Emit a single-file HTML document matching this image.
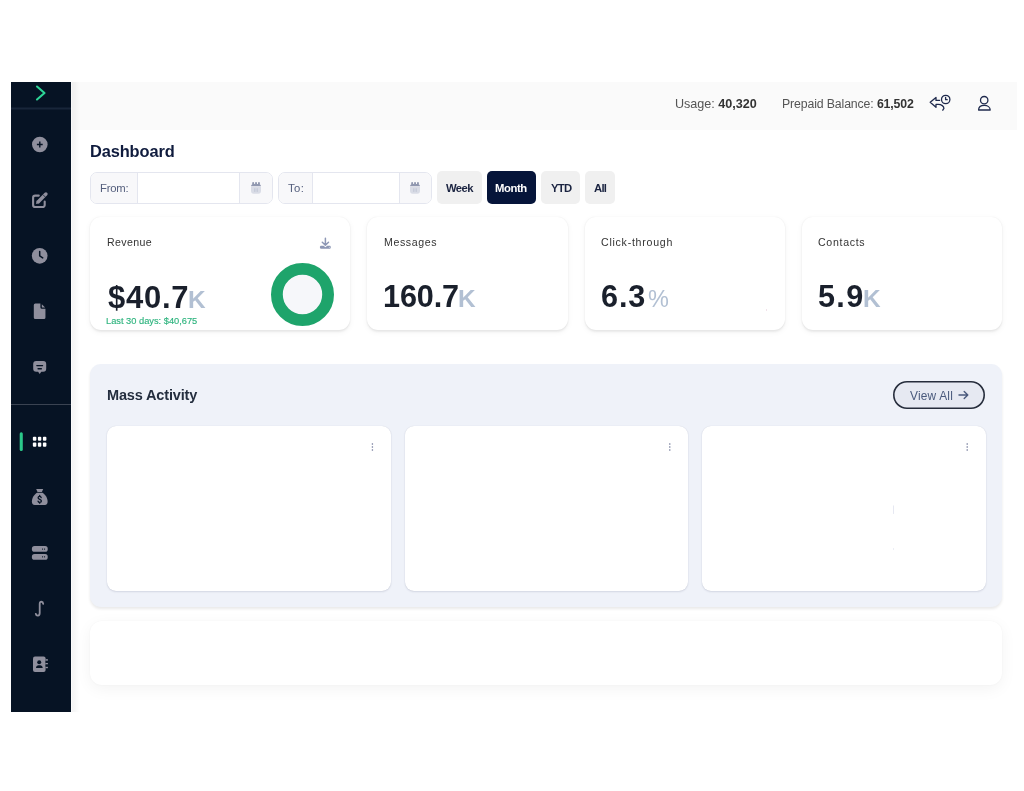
<!DOCTYPE html>
<html><head><meta charset="utf-8">
<style>
*{box-sizing:border-box;margin:0;padding:0}
html,body{width:1024px;height:791px;overflow:hidden;background:#fff;font-family:"Liberation Sans",sans-serif}
.a{position:absolute}
#sb{left:11px;top:82px;width:60px;height:630px;background:#061324}
#top{left:71px;top:82px;width:946px;height:48px;background:#fafafa}
#gut{left:71px;top:82px;width:9px;height:630px;background:linear-gradient(to right,rgba(255,255,255,.9) 0,rgba(0,0,0,.045) 1.2px,rgba(0,0,0,.03) 4px,rgba(0,0,0,.012) 7px,rgba(0,0,0,0) 9px)}
.txt{white-space:nowrap;line-height:1;-webkit-font-smoothing:antialiased;will-change:transform}
.ig{height:31.5px;border:1px solid #e4e6ef;border-radius:7px;background:#fff;overflow:hidden}
.ig .lb{position:absolute;top:0;bottom:0;left:0;background:#f8f8fa;border-right:1px solid #e4e6ef}
.ig .cal{position:absolute;top:0;bottom:0;right:0;background:#f8f8fa;border-left:1px solid #e4e6ef}
.btn{top:171px;height:33px;border-radius:5px;background:#f0f0f0;color:#1b2441;font-weight:bold;font-size:10.3px}
.card{top:217.3px;height:113.2px;background:#fff;border-radius:11px;box-shadow:0 1.5px 2px rgba(0,0,0,.055),0 2px 6px rgba(0,0,0,.05),0 0 1.5px rgba(0,0,0,.06)}
.ct{font-size:10.5px;letter-spacing:.3px;color:#333}
.val{font-weight:bold;color:#1a202c}
.k{font-weight:bold;color:#b2c0d3}
.mc{top:426px;height:164.5px;background:#fff;border-radius:9px;box-shadow:0 1px 2px rgba(30,40,80,.12),0 0 1px rgba(30,40,80,.15)}
.ic{fill:#8e8e9b}
</style></head><body>
<div id="sb" class="a"></div>
<div id="top" class="a"></div>
<div id="gut" class="a"></div>

<!-- sidebar icons -->
<svg class="a" style="left:0;top:0" width="80" height="791" viewBox="0 0 80 791">
  <polyline points="37,86.5 44.5,93 37,99.5" fill="none" stroke="#2dd697" stroke-width="2.1" stroke-linecap="round" stroke-linejoin="round"/>
  <rect x="11" y="107.5" width="60" height="2" fill="#18263a"/>
  <g fill="#8f8f9d">
  <!-- plus circle -->
  <circle cx="39.8" cy="144.5" r="7.8"/>
  <!-- edit -->
  <path d="M38.8,195.6 H35.2 a2.1,2.1 0 0 0 -2.1,2.1 V204.9 a2.1,2.1 0 0 0 2.1,2.1 H42.6 a2.1,2.1 0 0 0 2.1,-2.1 V201.6" fill="none" stroke="#8f8f9d" stroke-width="2.1" stroke-linecap="round"/>
  <line x1="38.3" y1="201.7" x2="45.9" y2="194.1" stroke="#8f8f9d" stroke-width="3.5" stroke-linecap="round"/>
  <path d="M35.9,204 L36.9,200.3 L39.7,203.1 Z"/>
  <!-- clock -->
  <circle cx="39.7" cy="255.8" r="7.85"/>
  <!-- file -->
  <path d="M35.3,303.6 H40.4 V307.3 a1.5,1.5 0 0 0 1.5,1.5 H45.45 V317.6 a1.5,1.5 0 0 1 -1.5,1.5 H35.3 a1.5,1.5 0 0 1 -1.5,-1.5 V305.1 a1.5,1.5 0 0 1 1.5,-1.5 Z"/>
  <path d="M41.8,304.2 L45.1,307.6 H42.3 a0.5,0.5 0 0 1 -0.5,-0.5 Z"/>
  <!-- message -->
  <path d="M36.2,360.9 H43.2 a3,3 0 0 1 3,3 V368.8 a3,3 0 0 1 -3,3 H41.3 L39.7,374 L38.1,371.8 H36.2 a3,3 0 0 1 -3,-3 V363.9 a3,3 0 0 1 3,-3 Z"/>
  <!-- money bag -->
  <path d="M36.2,488.9 H43.2 L41.9,492 H37.5 Z"/>
  <path d="M37,492.8 H42.5 C45.5,494.5 47.6,498.5 47.6,501.5 C47.6,503.5 46.8,505 44.8,505 H34.7 C32.7,505 31.9,503.5 31.9,501.5 C31.9,498.5 34,494.5 37,492.8 Z"/>
  <!-- server -->
  <rect x="31.9" y="546" width="15.8" height="5.8" rx="2.6"/>
  <rect x="31.9" y="553.9" width="15.8" height="5.9" rx="2.6"/>
  <!-- integral -->
  <path d="M43.2,603.8 C43,601.5 39.7,600.6 39.7,604 V613 C39.7,616.3 36.3,616.3 35.8,613.8" fill="none" stroke="#8f8f9d" stroke-width="1.8" stroke-linecap="round"/>
  <!-- contacts -->
  <rect x="33" y="656.6" width="12.6" height="15.4" rx="2"/>
  <rect x="45.6" y="659.2" width="2.3" height="1.6"/>
  <rect x="45.6" y="662.9" width="2.3" height="1.6"/>
  <rect x="45.6" y="666.6" width="2.3" height="1.6"/>
  </g>
  <g fill="#061324" stroke="none">
  <path d="M36.9,144.5h5.8M39.8,141.6v5.8" stroke="#061324" stroke-width="1.4"/>
  <path d="M39.7,251.4 V255.9 L42.7,257.9" fill="none" stroke="#061324" stroke-width="1.5" stroke-linecap="round" stroke-linejoin="round"/>
  <line x1="42.9" y1="194.6" x2="45.4" y2="197.1" stroke="#061324" stroke-width="0.7"/>
  <rect x="36.2" y="364.9" width="7" height="1.3" rx=".6"/>
  <rect x="37.4" y="368.1" width="4.6" height="1.3" rx=".6"/>
  <path d="M41.2,497.6 C41,496.8 40.4,496.4 39.7,496.4 C38.7,496.4 38.1,496.9 38.1,497.7 C38.1,499.6 41.4,499 41.4,501 C41.4,501.8 40.7,502.3 39.7,502.3 C38.9,502.3 38.3,501.9 38.1,501.2 M39.7,495.4 V496.4 M39.7,502.3 V503.2" fill="none" stroke="#061324" stroke-width="1.3" stroke-linecap="round"/>
  <rect x="42" y="548.4" width="1.1" height="1.3" rx=".4"/>
  <rect x="44" y="548.4" width="1.1" height="1.3" rx=".4"/>
  <rect x="42" y="556.2" width="1.1" height="1.3" rx=".4"/>
  <rect x="44" y="556.2" width="1.1" height="1.3" rx=".4"/>
  <circle cx="39.2" cy="662.3" r="2"/>
  <path d="M36,668 C36,666.2 37.3,665.3 38.4,665.3 H40.2 C41.3,665.3 42.7,666.2 42.7,668 Z"/>
  <rect x="45.6" y="660.8" width="2.3" height="2.1"/>
  <rect x="45.6" y="664.5" width="2.3" height="2.1"/>
  </g>
  <rect x="11" y="404" width="60" height="1" fill="#3a4352"/>
  <rect x="19.7" y="432.3" width="3.1" height="18.8" rx="1.5" fill="#2bc88a"/>
  <g fill="#fff">
  <rect x="32.85" y="436.7" width="3.5" height="4.1" rx="1"/>
  <rect x="37.9" y="436.7" width="3.4" height="4.1" rx="1"/>
  <rect x="42.9" y="436.7" width="3.5" height="4.1" rx="1"/>
  <rect x="32.85" y="442.6" width="3.5" height="4.1" rx="1"/>
  <rect x="37.9" y="442.6" width="3.4" height="4.1" rx="1"/>
  <rect x="42.9" y="442.6" width="3.5" height="4.1" rx="1"/>
  </g>
</svg>

<!-- top bar -->
<div class="a txt" style="left:675.02px;top:98.08px;font-size:12.6px;letter-spacing:-0.02px;color:#555">Usage: <b style="color:#333">40,320</b></div>
<div class="a txt" style="left:781.65px;top:98.0px;font-size:12.3px;letter-spacing:-0.13px;color:#555">Prepaid Balance: <b style="color:#333">61,502</b></div>


<svg class="a" style="left:920px;top:88px" width="80" height="30" viewBox="920 88 80 30">
  <g fill="none" stroke="#1f2a4d" stroke-width="1.3" stroke-linecap="round" stroke-linejoin="round">
    <path d="M939.6,100.4 H936 V97.4 L930.2,102.3 L936,107.3 V104.4 H938.3 C941.5,104.4 943.9,106.3 943.9,108.4 L942.8,110.2"/>
    <circle cx="945.7" cy="99.5" r="4.2"/>
    <path d="M945.6,97.3 V99.7 H947.2"/>
    <circle cx="984.2" cy="100.2" r="3.7"/>
    <path d="M978.6,110 C978.6,107.2 981,105.4 984.3,105.4 C987.6,105.4 990.2,107.2 990.2,110 Z"/>
  </g>
</svg>

<!-- title -->
<div class="a txt" style="left:90.01px;top:142.5px;font-size:16.4px;letter-spacing:-0.12px;font-weight:bold;color:#0f1b3d">Dashboard</div>

<!-- date groups -->
<div class="a ig" style="left:90px;top:172px;width:183px">
  <div class="lb" style="width:47px"></div>
  <div class="cal" style="width:33px"></div>
</div>
<div class="a ig" style="left:277.5px;top:172px;width:154.5px">
  <div class="lb" style="width:34px"></div>
  <div class="cal" style="width:32.5px"></div>
</div>
<div class="a txt" style="left:99.51px;top:183.23px;font-size:11.3px;letter-spacing:-0.2px;color:#56607e">From:</div>
<div class="a txt" style="left:287.51px;top:183.23px;font-size:11.3px;letter-spacing:0.36px;color:#56607e">To:</div>

<div class="a btn" style="left:437px;width:45px"></div>
<div class="a btn" style="left:487px;width:49px;background:#06153a"></div>
<div class="a btn" style="left:541px;width:39px"></div>
<div class="a btn" style="left:585px;width:30px"></div>
<div class="a txt" style="left:445.78px;top:182.94px;font-size:11.3px;letter-spacing:-0.6px;font-weight:bold;color:#1b2441">Week</div>
<div class="a txt" style="left:494.96px;top:182.94px;font-size:11.3px;letter-spacing:-0.42px;font-weight:bold;color:#fff">Month</div>
<div class="a txt" style="left:550.5px;top:182.94px;font-size:11.3px;letter-spacing:-0.75px;font-weight:bold;color:#1b2441">YTD</div>
<div class="a txt" style="left:593.8px;top:182.94px;font-size:11.3px;letter-spacing:-0.73px;font-weight:bold;color:#1b2441">All</div>

<!-- cards -->
<div class="a card" style="left:90px;width:260px"></div>
<div class="a card" style="left:367px;width:201px"></div>
<div class="a card" style="left:585px;width:200px"></div>
<div class="a card" style="left:802px;width:200px"></div>

<div class="a txt" style="left:106.62px;top:236.98px;font-size:10.6px;letter-spacing:0.39px;color:#333">Revenue</div>
<div class="a txt" style="left:383.69px;top:236.88px;font-size:10.6px;letter-spacing:0.61px;color:#333">Messages</div>
<div class="a txt" style="left:601.2px;top:236.88px;font-size:10.6px;letter-spacing:0.74px;color:#333">Click-through</div>
<div class="a txt" style="left:818.2px;top:236.88px;font-size:10.6px;letter-spacing:0.69px;color:#333">Contacts</div>

<div class="a txt val" style="left:107.62px;top:282.2px;font-size:31.0px;letter-spacing:0.74px;">$40.7</div><div class="a txt k" style="left:187.98px;top:288.2px;font-size:24.4px;letter-spacing:-1.72px;letter-spacing:0">K</div>
<div class="a txt val" style="left:383.01px;top:280.8px;font-size:30.6px;letter-spacing:-0.13px;">160.7</div><div class="a txt k" style="left:458.18px;top:286.8px;font-size:24.4px;letter-spacing:-2.02px;letter-spacing:0">K</div>
<div class="a txt val" style="left:601.18px;top:280.8px;font-size:30.6px;letter-spacing:0.91px;">6.3</div><div class="a txt k" style="left:647.92px;top:287.84px;font-size:23.5px;letter-spacing:-0.15px;letter-spacing:0;font-weight:normal">%</div>
<div class="a txt val" style="left:818.07px;top:280.8px;font-size:30.6px;letter-spacing:1.31px;">5.9</div><div class="a txt k" style="left:862.88px;top:286.8px;font-size:24.4px;letter-spacing:-0.22px;letter-spacing:0">K</div>
<div class="a txt" style="left:106.49px;top:316.94px;font-size:9.3px;letter-spacing:-0.01px;color:#2fb47f;-webkit-text-stroke:0.15px #2fb47f">Last 30 days: $40,675</div>

<svg class="a" style="left:270px;top:262px" width="66" height="66" viewBox="0 0 66 66">
  <circle cx="32.5" cy="32.5" r="25.6" fill="#f6f7fa" stroke="#1ea46b" stroke-width="11.8"/>
</svg>

<!-- mass activity -->
<div class="a" style="left:90px;top:364px;width:912px;height:243px;background:#eff2f9;border-radius:11px;box-shadow:0 2px 3px rgba(0,0,0,.09)"></div>
<div class="a txt" style="left:106.68px;top:387.9px;font-size:14.5px;letter-spacing:-0.15px;font-weight:bold;color:#242e3f">Mass Activity</div>
<svg class="a" style="left:892px;top:380px" width="94" height="30" viewBox="892 380 94 30"><rect x="893.8" y="381.8" width="90.4" height="26.4" rx="13.2" fill="#e6e9f2" stroke="#262d3c" stroke-width="1.6"/></svg>
<div class="a txt" style="left:909.87px;top:390.52px;font-size:11.9px;letter-spacing:0.2px;color:#4a5a7d">View All</div>
<div class="a mc" style="left:107px;width:283.5px"></div>
<div class="a mc" style="left:404.5px;width:283.5px"></div>
<div class="a mc" style="left:702px;width:283.5px"></div>

<!-- bottom card -->
<div class="a" style="left:90px;top:621px;width:912px;height:64px;background:#fff;border-radius:12px;box-shadow:0 4px 16px rgba(0,0,0,.05),0 0 2px rgba(0,0,0,.04)"></div>


<svg class="a" style="left:0;top:0" width="1024" height="791" viewBox="0 0 1024 791">
  <!-- calendars -->
  <g id="cal1">
    <rect x="252.2" y="182" width="1.9" height="3" rx=".9" fill="#9198b0"/>
    <rect x="255.1" y="182" width="1.9" height="3" rx=".9" fill="#9198b0"/>
    <rect x="258" y="182" width="1.9" height="3" rx=".9" fill="#9198b0"/>
    <path d="M251,186.3 C251,184.8 252,183.9 253.3,183.9 H258.7 C260,183.9 261,184.8 261,186.3 Z" fill="#9198b0"/>
    <path d="M251,186.8 H261 V191 C261,192.6 260,193.7 258.4,193.7 H253.6 C252,193.7 251,192.6 251,191 Z" fill="#d9dce6"/>
    <rect x="254.2" y="188.3" width=".7" height="3.6" fill="#bfc4d3"/>
    <rect x="255.65" y="188.3" width=".7" height="3.6" fill="#bfc4d3"/>
    <rect x="257.1" y="188.3" width=".7" height="3.6" fill="#bfc4d3"/>
  </g>
  <use href="#cal1" x="159" y="0"/>
  <!-- download -->
  <g fill="none" stroke="#8d97b5" stroke-width="1.5" stroke-linecap="round" stroke-linejoin="round">
    <path d="M325.4,238.3 V245.2 M322.3,242.3 L325.4,245.3 L328.5,242.3"/>
  </g>
  <path d="M321.2,245.8 H323.6 L325.4,247.2 L327.2,245.8 H329.6 C330.4,245.8 330.8,246.4 330.8,247.2 C330.8,248 330.4,248.7 329.6,248.7 H321.2 C320.4,248.7 319.9,248 319.9,247.2 C319.9,246.4 320.4,245.8 321.2,245.8 Z" fill="#8d97b5"/>
  <circle cx="329.3" cy="247.3" r=".45" fill="#fff"/>
  <!-- kebabs -->
  <g fill="#6c7596">
    <circle cx="372.4" cy="444" r=".8"/><circle cx="372.4" cy="447" r=".8"/><circle cx="372.4" cy="450" r=".8"/>
    <circle cx="669.8" cy="444" r=".8"/><circle cx="669.8" cy="447" r=".8"/><circle cx="669.8" cy="450" r=".8"/>
    <circle cx="967.2" cy="444" r=".8"/><circle cx="967.2" cy="447" r=".8"/><circle cx="967.2" cy="450" r=".8"/>
  </g>
  <rect x="893" y="505.5" width="1" height="8.4" fill="#e6e8f2"/>
  <rect x="893" y="548" width="1" height="2" fill="#eceef5"/>
  <rect x="766" y="309" width="1" height="2" fill="#f1e2ea"/>
  <!-- view all arrow -->
  <path d="M959,395 H967.8 M964.2,391.6 L967.8,395 L964.2,398.4" fill="none" stroke="#4a5a7d" stroke-width="1.4" stroke-linecap="round" stroke-linejoin="round"/>
</svg>

</body></html>
